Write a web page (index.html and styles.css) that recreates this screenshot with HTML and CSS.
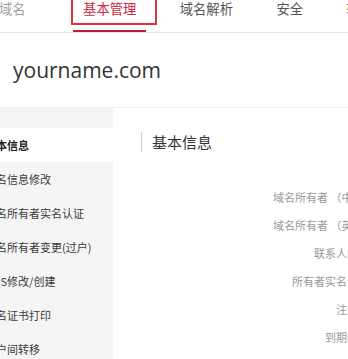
FILE: index.html
```html
<!DOCTYPE html>
<html lang="zh-CN">
<head>
  <meta charset="UTF-8" />
  <meta name="viewport" content="width=device-width, initial-scale=1.0"/>
  <title>域名管理 - yourname.com</title>
  <link rel="stylesheet" href="styles.css">
</head>
<body>
  <div class="page">
    <div class="topnav">
      <div class="nav-title">域名</div>
      <div class="nav-tab active">基本管理</div>
      <div class="nav-tab">域名解析</div>
      <div class="nav-tab">安全</div>
      <div class="nav-tab">转入</div>
    </div>

    <div class="domain-head">yourname.com</div>

    <div class="main">
      <div class="sidebar">
        <div class="side-item active">基本信息</div>
        <div class="side-item">域名信息修改</div>
        <div class="side-item">域名所有者实名认证</div>
        <div class="side-item">域名所有者变更(过户)</div>
        <div class="side-item">DNS修改/创建</div>
        <div class="side-item">域名证书打印</div>
        <div class="side-item">帐户间转移</div>
      </div>

      <div class="content">
        <div class="section-title">基本信息</div>
        <div class="info-list">
          <div class="info-row"><span class="label">域名所有者 （中文）：</span></div>
          <div class="info-row"><span class="label">域名所有者 （英文）：</span></div>
          <div class="info-row"><span class="label">联系人邮箱：</span></div>
          <div class="info-row"><span class="label">所有者实名认证：</span></div>
          <div class="info-row"><span class="label">注册商：</span></div>
          <div class="info-row"><span class="label">到期时间：</span></div>
        </div>
      </div>
    </div>
  </div>
</body>
</html>
```

FILE: styles.css
```css
body {
  margin: 0;
  overflow: hidden;
  background-color: #ffffff;
  font-family: "Noto Sans CJK SC", "Noto Sans", sans-serif;
  color: #333333;
}
.page {
  margin-left: -28px;
  width: 480px;
}
.topnav {
  display: flex;
  gap: 23.5px;
  height: 32px;
  padding-left: 27px;
  border-bottom: 1px solid #e6e6e6;
  font-size: 13.3px;
  line-height: 17px;
}
.nav-title {
  color: #a0a0a0;
  margin-right: 24px;
}
.nav-tab {
  position: relative;
  padding: 0 10px;
  color: #555555;
  white-space: nowrap;
}
.nav-tab.active {
  color: #c9283e;
  border-bottom: 2px solid #b32338;
  height: 30px;
}
.nav-tab.active::after {
  content: "";
  position: absolute;
  left: -2px;
  right: -11px;
  top: -12px;
  bottom: 5px;
  border: 2px solid #dc3438;
}
.domain-head {
  height: 74px;
  padding-left: 41px;
  border-bottom: 1px solid #eeeeee;
  font-family: "Open Sans", sans-serif;
  font-size: 21px;
  line-height: 74px;
  color: #333333;
}
.main {
  display: flex;
}
.sidebar {
  width: 141px;
  padding-top: 20px;
  background-color: #f5f5f5;
  min-height: 260px;
}
.side-item {
  height: 34px;
  padding-left: 13px;
  font-size: 11px;
  line-height: 34px;
  color: #3a3a3a;
  white-space: nowrap;
}
.side-item.active {
  background-color: #ffffff;
  color: #222222;
  font-weight: bold;
}
.content {
  flex: 1;
  padding-top: 24px;
}
.section-title {
  margin-left: 28px;
  padding-left: 10px;
  border-left: 1px solid #cccccc;
  font-size: 15px;
  line-height: 20px;
  color: #333333;
}
.info-list {
  margin-top: 31px;
}
.info-row {
  display: flex;
  height: 28px;
  line-height: 28px;
  font-size: 11px;
}
.label {
  width: 267px;
  text-align: right;
  color: #999999;
  white-space: nowrap;
}
```
